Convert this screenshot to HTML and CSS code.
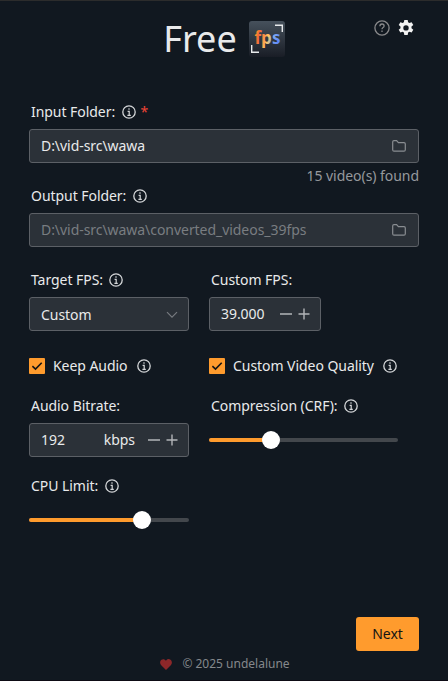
FILE: index.html
```html
<!DOCTYPE html>
<html lang="en">
<head>
<meta charset="utf-8">
<title>Free FPS</title>
<link rel="stylesheet" href="styles.css">
</head>
<body>
<svg class="defs" aria-hidden="true">
  <symbol id="info" viewBox="0 0 14 14"><circle cx="7" cy="7" r="6.2" fill="none" stroke="currentColor" stroke-width="1.3"/><path d="M7 3.2v1.6M5.6 6.4H7.2v4M5.4 10.4h3.4" fill="none" stroke="currentColor" stroke-width="1.2"/></symbol>
  <symbol id="folder" viewBox="0 0 14 12"><path d="M.7 9.7V2Q.7.7 2 .7H4.6L6.4 2.7H12Q13.3 2.7 13.3 4V9.7Q13.3 11.2 12 11.2H2Q.7 11.2.7 9.7Z" fill="none" stroke="currentColor" stroke-width="1.2"/></symbol>
  <symbol id="steps" viewBox="0 0 30 12"><path d="M0 6H12M18.500 6h11M24 .5v11" fill="none" stroke="currentColor" stroke-width="1.4"/></symbol>
  <symbol id="check" viewBox="0 0 16 16"><path d="M3.400 8.200 6.500 11.100 12.700 4.800" fill="none" stroke="currentColor" stroke-width="1.6"/></symbol>
</svg>
<main class="window">
  <header class="header">
    <h1>Free</h1>
    <svg class="logo" viewBox="0 0 36 36">
      <defs>
        <linearGradient id="tile" x1="0" y1="0" x2="0" y2="1"><stop stop-color="#46515c"/><stop offset="1" stop-color="#191d26"/></linearGradient>
        <linearGradient id="fps" gradientUnits="userSpaceOnUse" x1="5" y1="12" x2="31" y2="20"><stop stop-color="#ffac30"/><stop offset=".18" stop-color="#f36a35"/><stop offset=".36" stop-color="#f98a45"/><stop offset=".55" stop-color="#ffc763"/><stop offset=".72" stop-color="#7fa9ee"/><stop offset="1" stop-color="#5680ff"/></linearGradient>
      </defs>
      <rect width="36" height="36" rx="3" fill="url(#tile)"/>
      <path d="M26 4.200h7.300V11M2.700 24v7.300H10" fill="none" stroke="#e8eaec" stroke-width="1.400"/>
      <text class="logo-text" x="5.500" y="23" textLength="26" lengthAdjust="spacingAndGlyphs" fill="url(#fps)">fps</text>
    </svg>
    <div class="tools">
      <svg class="help" viewBox="0 0 16 16"><circle cx="8" cy="8" r="7.100" fill="none" stroke="currentColor" stroke-width="1.300"/><path d="M5.900 6.200Q5.900 4 8 4t2.100 1.900Q10.100 7 8.800 7.700 8 8.200 8 9.300M8 10.500v1.500" fill="none" stroke="currentColor" stroke-width="1.300"/></svg>
      <svg class="gear" viewBox="0 0 16 16"><path fill="currentColor" fill-rule="evenodd" d="M6.300 0h3.400l.4 2.300 1.300.75 2.200-.85 1.700 2.900-1.800 1.500v1.600l1.800 1.500-1.700 2.900-2.200-.85-1.300.75-.4 2.500H6.300l-.4-2.500-1.300-.75-2.200.85-1.700-2.900 1.800-1.500V6.600L.7 5.100l1.700-2.900 2.200.85 1.300-.75ZM8 5.200a2.700 2.700 0 1 0 0 5.400a2.700 2.700 0 1 0 0-5.400Z"/></svg>
    </div>
  </header>

  <section class="form">
    <div class="control wide">
      <div class="label">Input Folder:<svg class="info"><use href="#info"/></svg><span class="required">*</span></div>
      <div class="field">D:\vid-src\wawa<svg class="folder"><use href="#folder"/></svg></div>
      <div class="note">15 video(s) found</div>
    </div>
    <div class="control wide output">
      <div class="label">Output Folder:<svg class="info"><use href="#info"/></svg></div>
      <div class="field muted">D:\vid-src\wawa\converted_videos_39fps<svg class="folder"><use href="#folder"/></svg></div>
    </div>
    <div class="control">
      <div class="label">Target FPS:<svg class="info"><use href="#info"/></svg></div>
      <div class="field select">Custom<svg class="chevron" viewBox="0 0 12 8"><path d="M1 1.200 6 6.200 11 1.200" fill="none" stroke="currentColor" stroke-width="1.200"/></svg></div>
    </div>
    <div class="control">
      <div class="label">Custom FPS:</div>
      <div class="field narrow">39.000<svg class="steps"><use href="#steps"/></svg></div>
    </div>
    <div class="toggle"><svg class="box"><use href="#check"/></svg>Keep Audio<svg class="info"><use href="#info"/></svg></div>
    <div class="toggle"><svg class="box"><use href="#check"/></svg>Custom Video Quality<svg class="info"><use href="#info"/></svg></div>
    <div class="control">
      <div class="label">Audio Bitrate:</div>
      <div class="field">192<span class="unit">kbps</span><svg class="steps"><use href="#steps"/></svg></div>
    </div>
    <div class="control">
      <div class="label">Compression (CRF):<svg class="info"><use href="#info"/></svg></div>
      <div class="slider crf"><span class="fill" style="width:62px"></span><span class="thumb"></span></div>
    </div>
    <div class="control cpu">
      <div class="label">CPU Limit:<svg class="info"><use href="#info"/></svg></div>
      <div class="slider"><span class="fill" style="width:113px"></span><span class="thumb"></span></div>
    </div>
  </section>

  <div class="actions"><button class="next">Next</button></div>
  <footer class="footer"><svg class="heart" viewBox="0 0 12 11"><path fill="currentColor" d="M6 11 1.200 6.200C-.4 4.500-.2 1.800 1.500.7 3-.3 5 .2 6 1.800 7-.2 9-.3 10.500.7c1.700 1.100 1.900 3.800.3 5.500Z"/></svg>© 2025 undelalune</footer>
</main>
</body>
</html>
```

FILE: styles.css
```css
* { box-sizing: border-box; }
body {
  margin: 0;
  background: #111820;
  color: #e9eaeb;
  font: 14px/20px "Noto Sans", sans-serif;
  letter-spacing: -0.05px;
}
svg { display: block; flex: none; }
.defs { position: absolute; width: 0; height: 0; }
.window {
  display: flex;
  flex-direction: column;
  height: 681px;
  padding: 0 29px;
  border-top: 1px solid #2c2c2c;
  border-bottom: 1px solid #0d0b14;
}
.header {
  position: relative;
  display: flex;
  justify-content: center;
  gap: 12px;
  height: 101px;
  padding-top: 20px;
}
h1 { margin: -1px 0 0; font-size: 36px; font-weight: 400; line-height: 38px; letter-spacing: 0; }
.logo { width: 36px; height: 36px; }
.logo-text { font: 700 17px "Noto Sans", sans-serif; letter-spacing: 0; }
.tools {
  position: absolute;
  top: 19px;
  right: 5px;
  display: flex;
  gap: 8px;
}
.help, .gear { width: 16px; height: 16px; }
.help { color: #89898b; }
.gear { color: #f2f2f2; }
.form {
  display: grid;
  grid-template-columns: 160px 189px;
  column-gap: 20px;
}
.wide { grid-column: 1 / -1; width: 390px; }
.output { margin-bottom: 23px; }
.label {
  display: flex;
  align-items: center;
  height: 20px;
  margin-bottom: 7px;
  padding-left: 2px;
}
.info { width: 14px; height: 14px; margin-left: 6.5px; color: #d5d7d9; }
.required { margin-left: 5px; color: #f04436; }
.field {
  display: flex;
  align-items: center;
  height: 34px;
  padding: 0 11px;
  border: 1px solid #5c6066;
  border-radius: 3px;
  background: #2b3138;
}
.select { padding-top: 1px; }
.muted { color: #797d81; }
.narrow { width: 112px; }
.folder { width: 14px; height: 12px; margin-left: auto; margin-right: 1px; color: #898d91; }
.chevron { width: 12px; height: 8px; margin-left: auto; margin-right: -1px; color: #767a7f; }
.steps { width: 30px; height: 12px; margin-left: auto; margin-right: -1px; color: #b3b5b8; }
.unit { margin-left: auto; }
.unit + .steps { margin-left: 13px; }
.note { height: 20px; margin-top: 3px; text-align: right; color: #96999d; }
.toggle {
  display: flex;
  align-items: center;
  height: 20px;
  margin: 25px 0 20px;
  white-space: nowrap;
}
.toggle .info { margin-left: 9px; }
.box {
  width: 16px;
  height: 16px;
  margin-right: 8px;
  border-radius: 1px;
  background: #ff9b2d;
  color: #141414;
}
.slider {
  display: flex;
  align-items: center;
  height: 4px;
  border-radius: 2px;
  background: #43474c;
}
.crf { margin-top: 22px; }
.fill { height: 4px; border-radius: 2px 0 0 2px; background: #ff9b2d; }
.thumb { flex: none; width: 18px; height: 18px; margin-left: -9px; border-radius: 50%; background: #fff; }
.cpu { margin-top: 19px; }
.cpu .slider { margin-top: 22px; }
.actions { display: flex; justify-content: flex-end; margin-top: auto; }
.next {
  width: 63px;
  height: 34px;
  padding: 0;
  border: 0;
  border-radius: 3px;
  background: #ff9b2d;
  color: #141414;
  font: inherit;
}
.footer {
  display: flex;
  justify-content: center;
  align-items: center;
  gap: 10px;
  height: 18px;
  margin: 4px 0 7px;
  padding-left: 2px;
  color: #85888c;
  font-size: 12px;
  line-height: 18px;
  letter-spacing: 0;
}
.heart { width: 12px; height: 11px; color: #8c2729; }
```
